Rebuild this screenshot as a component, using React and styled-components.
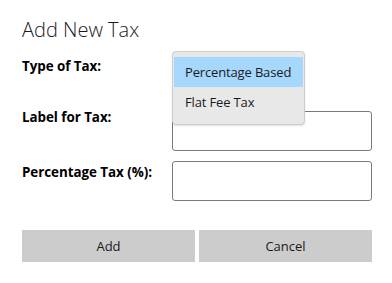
import React from "react";
import styled, { createGlobalStyle } from "styled-components";

const Global = createGlobalStyle`
  html, body { margin: 0; padding: 0; background: #ffffff; }
  body { font-family: "Open Sans", "Noto Sans", sans-serif; color: #000; }
`;

const Page = styled.div`
  width: 392px;
  height: 283px;
  box-sizing: border-box;
  padding: 16px 20px 0 22px;
`;

const Title = styled.h1`
  margin: 0;
  font-size: 20px;
  font-weight: 300;
  line-height: 27px;
  color: #1a1a1a;
`;

const Form = styled.div`
  display: grid;
  grid-template-columns: 150px 200px;
  grid-auto-rows: 40px;
  row-gap: 10px;
  margin-top: 18px;
`;

const Label = styled.div`
  font-size: 13.4px;
  font-weight: 700;
  line-height: 16px;
  margin-top: ${(p) => p.$offset}px;
  letter-spacing: -0.05px;
`;

const Anchor = styled.div`
  position: relative;
  z-index: 2;
`;

const ComboBox = styled.div`
  width: 133px;
  height: 32px;
  box-sizing: border-box;
`;

const Popup = styled.div`
  position: absolute;
  left: 0;
  top: -10px;
  width: 133px;
  box-sizing: border-box;
  background: #e8e8e8;
  border: 1px solid #cdcdcd;
  border-radius: 4px;
  padding: 5px 1px 7px 1px;
  box-shadow: 0 1px 2px rgba(0, 0, 0, 0.12);
`;

const Option = styled.div`
  height: 30px;
  display: flex;
  align-items: center;
  padding-left: 11px;
  font-size: 13px;
  color: #1a1a1a;
  background: ${(p) => (p.$selected ? "#a6d8fe" : "transparent")};
  letter-spacing: -0.15px;
`;

const Input = styled.input`
  width: 200px;
  height: 40px;
  box-sizing: border-box;
  border: 1px solid #7a7a7a;
  border-radius: 3px;
  background: #fff;
  margin: 0;
  padding: 0 8px;
  font: inherit;
`;

const Buttons = styled.div`
  display: grid;
  grid-template-columns: 173px 173px;
  column-gap: 4px;
  margin-top: 29px;
`;

const Button = styled.button`
  height: 32px;
  border: none;
  background: #cccccc;
  font-family: "Open Sans", "Noto Sans", sans-serif;
  font-size: 13px;
  color: #1a1a1a;
  padding: 0;
`;

export default function App() {
  return (
    <Page>
      <Global />
      <Title>Add New Tax</Title>
      <Form>
        <Label $offset={-3}>Type of Tax:</Label>
        <Anchor>
          <ComboBox />
          <Popup>
            <Option $selected>Percentage Based</Option>
            <Option>Flat Fee Tax</Option>
          </Popup>
        </Anchor>
        <Label $offset={-2}>Label for Tax:</Label>
        <Input />
        <Label $offset={3}>Percentage Tax (%):</Label>
        <Input />
      </Form>
      <Buttons>
        <Button>Add</Button>
        <Button>Cancel</Button>
      </Buttons>
    </Page>
  );
}
